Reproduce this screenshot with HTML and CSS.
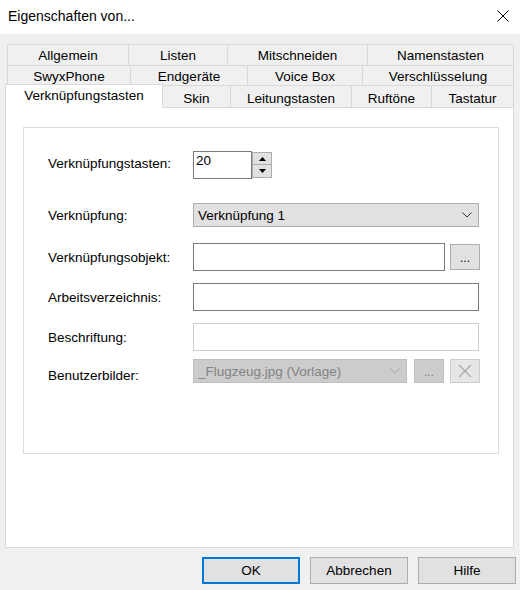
FILE: index.html
```html
<!DOCTYPE html>
<html lang="de">
<head>
<meta charset="UTF-8">
<title>Eigenschaften von...</title>
<link rel="stylesheet" href="styles.css">
</head>
<body>
<div class="titlebar">
    <span class="title">Eigenschaften von...</span>
    <svg class="close" width="12" height="12" viewBox="0 0 12 12">
        <path d="M0.5 0.5 L11.5 11.5 M11.5 0.5 L0.5 11.5" stroke="#000" stroke-width="1" fill="none"/>
    </svg>
</div>

<div class="dialog">
    <div class="tabs">
        <div class="tab-row row-1">
            <div class="tab">Allgemein</div>
            <div class="tab">Listen</div>
            <div class="tab">Mitschneiden</div>
            <div class="tab">Namenstasten</div>
        </div>
        <div class="tab-row row-2">
            <div class="tab">SwyxPhone</div>
            <div class="tab">Endgeräte</div>
            <div class="tab">Voice Box</div>
            <div class="tab">Verschlüsselung</div>
        </div>
        <div class="tab-row row-3">
            <div class="tab active">Verknüpfungstasten</div>
            <div class="tab">Skin</div>
            <div class="tab">Leitungstasten</div>
            <div class="tab">Ruftöne</div>
            <div class="tab">Tastatur</div>
        </div>
    </div>

    <div class="panel">
        <div class="group">
            <div class="field field-count">
                <label>Verknüpfungstasten:</label>
                <div class="spin">
                    <div class="spin-value">20</div>
                    <div class="spin-btns">
                        <div class="spin-btn">
                            <svg width="7" height="4" viewBox="0 0 7 4"><path d="M3.5 0 L7 4 L0 4 Z" fill="#000"/></svg>
                        </div>
                        <div class="spin-btn">
                            <svg width="7" height="4" viewBox="0 0 7 4"><path d="M0 0 L7 0 L3.5 4 Z" fill="#000"/></svg>
                        </div>
                    </div>
                </div>
            </div>

            <div class="field field-link">
                <label>Verknüpfung:</label>
                <div class="select">
                    <span>Verknüpfung 1</span>
                    <svg width="10" height="6" viewBox="0 0 10 6"><path d="M0.5 0.5 L5 5 L9.5 0.5" stroke="#333" fill="none"/></svg>
                </div>
            </div>

            <div class="field field-object">
                <label>Verknüpfungsobjekt:</label>
                <div class="input input-short"></div>
                <div class="btn-small">...</div>
            </div>

            <div class="field field-dir">
                <label>Arbeitsverzeichnis:</label>
                <div class="input"></div>
            </div>

            <div class="field field-caption">
                <label>Beschriftung:</label>
                <div class="input disabled"></div>
            </div>

            <div class="field field-images">
                <label>Benutzerbilder:</label>
                <div class="select select-short disabled">
                    <span>_Flugzeug.jpg (Vorlage)</span>
                    <svg width="10" height="6" viewBox="0 0 10 6"><path d="M0.5 0.5 L5 5 L9.5 0.5" stroke="#a6a6a6" fill="none"/></svg>
                </div>
                <div class="btn-small disabled">...</div>
                <div class="btn-small btn-clear">
                    <svg width="14" height="14" viewBox="0 0 14 14">
                        <path d="M1 1 L13 13 M13 1 L1 13" stroke="#a8a8a8" stroke-width="1.2" fill="none"/>
                    </svg>
                </div>
            </div>
        </div>
    </div>

    <div class="buttons">
        <div class="button default">OK</div>
        <div class="button">Abbrechen</div>
        <div class="button">Hilfe</div>
    </div>
</div>
</body>
</html>
```

FILE: styles.css
```css
html,
body {
    margin: 0;
    height: 100%;
}

body {
    width: 520px;
    height: 590px;
    background: #f0f0f0;
    font-family: 'Liberation Sans', Arial, sans-serif;
    font-size: 13.5px;
    color: #000;
    overflow: hidden;
}

/* window title */
.titlebar {
    height: 34px;
    background: #fff;
    display: flex;
    align-items: center;
    justify-content: space-between;
    padding: 0 11px 2px 8px;
    box-sizing: border-box;
}

.title {
    font-size: 14px;
}

/* tab strip */
.dialog {
    padding-top: 10px;
}

.tabs {
    margin-left: 5px;
    width: 509px;
}

.tab-row {
    display: grid;
}

.tab {
    display: flex;
    align-items: center;
    justify-content: center;
    border-top: 1px solid #d9d9d9;
    border-right: 1px solid #d9d9d9;
    box-sizing: border-box;
    padding-top: 1px;
}

.tab:first-child {
    border-left: 1px solid #d9d9d9;
}

.row-1 {
    margin-left: 2px;
    height: 21px;
    grid-template-columns: 122px 99px 140px 146px;
}

.row-2 {
    margin-left: 2px;
    height: 20px;
    grid-template-columns: 124px 117px 115px 151px;
}

.row-3 {
    height: 22px;
    grid-template-columns: 158px 68px 121px 80px 82px;
}

.row-3 .tab {
    padding-top: 2px;
}

.tab.active {
    position: relative;
    z-index: 1;
    height: 24px;
    margin-top: -1px;
    background: #fff;
    padding-top: 0;
    padding-bottom: 3px;
}

/* page body */
.panel {
    margin-left: 5px;
    width: 509px;
    height: 441px;
    box-sizing: border-box;
    background: #fff;
    border: 1px solid #d9d9d9;
    padding: 19px 0 0 17px;
}

.group {
    width: 476px;
    height: 327px;
    box-sizing: border-box;
    border: 1px solid #dcdcdc;
    padding: 23px 0 0 24px;
}

.field {
    display: flex;
    align-items: center;
}

.field label {
    width: 145px;
    flex: none;
}

.field-count { height: 28px; }
.field-link { height: 24px; margin-top: 24px; }
.field-object { height: 28px; margin-top: 16px; }
.field-dir { height: 28px; margin-top: 12px; }
.field-caption { height: 28px; margin-top: 12px; }
.field-images { height: 24px; margin-top: 8px; }

.field-count label {
    padding-bottom: 3px;
}

.field-images label {
    padding-top: 8px;
}

/* spin box */
.spin {
    display: flex;
    align-items: flex-start;
    height: 28px;
}

.spin-value {
    width: 59px;
    height: 28px;
    box-sizing: border-box;
    border: 1px solid #7a7a7a;
    padding: 1px 0 0 2px;
}

.spin-btns {
    width: 20px;
    margin-top: 1px;
    display: flex;
    flex-direction: column;
}

.spin-btn {
    height: 13px;
    box-sizing: border-box;
    background: #e1e1e1;
    border: 1px solid #adadad;
    display: flex;
    align-items: center;
    justify-content: center;
}

.spin-btn + .spin-btn {
    margin-top: -1px;
    height: 14px;
}

/* inputs and drop downs */
.input {
    width: 286px;
    height: 28px;
    box-sizing: border-box;
    border: 1px solid #7a7a7a;
    background: #fff;
}

.input-short {
    width: 252px;
}

.input.disabled {
    border-color: #cccccc;
}

.select {
    width: 286px;
    height: 24px;
    box-sizing: border-box;
    background: #e1e1e1;
    border: 1px solid #adadad;
    display: flex;
    align-items: center;
    justify-content: space-between;
    padding: 0 6px 0 4px;
}

.select-short {
    width: 214px;
}

.select.disabled {
    background: #cccccc;
    border-color: #bfbfbf;
    color: #838383;
}

.btn-small {
    width: 30px;
    height: 26px;
    margin-left: 5px;
    box-sizing: border-box;
    background: #e1e1e1;
    border: 1px solid #adadad;
    display: flex;
    align-items: center;
    justify-content: center;
    font-size: 12px;
    padding-top: 2px;
}

.btn-small.disabled {
    height: 24px;
    margin-left: 7px;
    background: #cccccc;
    border-color: #bfbfbf;
    color: #838383;
}

.btn-clear {
    height: 24px;
    margin-left: 6px;
    background: #e6e6e6;
    border-color: #cccccc;
    padding-top: 0;
}

/* dialog buttons */
.buttons {
    display: flex;
    justify-content: flex-end;
    gap: 10px;
    margin-top: 9px;
    padding-right: 4px;
}

.button {
    width: 98px;
    height: 27px;
    box-sizing: border-box;
    background: #e1e1e1;
    border: 1px solid #adadad;
    display: flex;
    align-items: center;
    justify-content: center;
}

.button.default {
    border: 2px solid #0078d7;
}
```
